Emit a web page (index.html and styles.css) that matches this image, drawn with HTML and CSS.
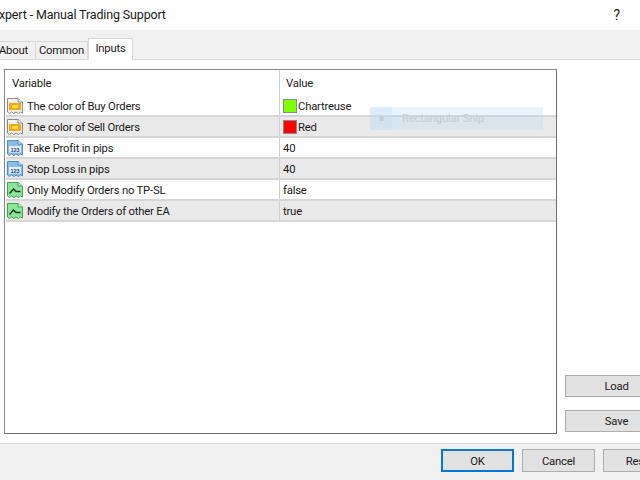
FILE: index.html
```html
<!DOCTYPE html>
<html lang="en">
<head>
<meta charset="utf-8">
<title>Expert - Manual Trading Support</title>
<link rel="stylesheet" href="styles.css">
</head>
<body>
<svg class="defs" width="0" height="0" aria-hidden="true">
  <symbol id="ic-color" viewBox="0 0 18 18">
    <path d="M1.500 1.500H12L16.500 5V16L14.500 15L12.500 16.500L10 15L8 16.500L5.500 15L3.500 16.500L1.500 15Z" fill="#f4f2ee" stroke="#8a8a86"/>
    <path d="M12 1.500V5H16.500" fill="#fff" stroke="#8a8a86"/>
    <rect x="3" y="6" width="12" height="7" fill="#f7a51e"/>
    <rect x="6" y="8" width="6" height="3" fill="#ffe23c"/>
  </symbol>
  <symbol id="ic-num" viewBox="0 0 18 18">
    <path d="M1.500 1.500H12L16.500 5V16L14.500 15L12.500 16.500L10 15L8 16.500L5.500 15L3.500 16.500L1.500 15Z" fill="#8dbce8" stroke="#4d8fc9"/>
    <path d="M12 1.500V5H16.500" fill="#d7e9f8" stroke="#4d8fc9"/>
    <rect x="3" y="7" width="12" height="6.500" fill="#e4f0fa"/>
    <text x="9" y="12.600" class="ic-num-text">123</text>
  </symbol>
  <symbol id="ic-bool" viewBox="0 0 18 18">
    <path d="M1.500 1.500H12L16.500 5V16L14.500 15L12.500 16.500L10 15L8 16.500L5.500 15L3.500 16.500L1.500 15Z" fill="#8fe39b" stroke="#39a94c"/>
    <path d="M12 1.500V5H16.500" fill="#d5f5da" stroke="#39a94c"/>
    <path d="M3.500 12.500L7.500 8L10 10.500H14.500" fill="none" stroke="#0f3f18" stroke-width="1.500"/>
  </symbol>
</svg>

<header class="title-bar">
  <span class="title">Expert - Manual Trading Support</span>
  <span class="help">?</span>
</header>

<nav class="tab-strip">
  <span class="tab tab-about">About</span>
  <span class="tab tab-common">Common</span>
  <span class="tab tab-active">Inputs</span>
</nav>

<main class="content">
  <section class="list">
    <div class="row head">
      <div class="cell var"><span class="head-label">Variable</span></div>
      <div class="cell val"><span class="head-label">Value</span></div>
    </div>
    <div class="row">
      <div class="cell var"><svg class="icon"><use href="#ic-color"/></svg><span>The color of Buy Orders</span></div>
      <div class="cell val"><i class="swatch swatch-green"></i><span>Chartreuse</span></div>
    </div>
    <div class="row alt">
      <div class="cell var"><svg class="icon"><use href="#ic-color"/></svg><span>The color of Sell Orders</span></div>
      <div class="cell val"><i class="swatch swatch-red"></i><span>Red</span></div>
    </div>
    <div class="row">
      <div class="cell var"><svg class="icon"><use href="#ic-num"/></svg><span>Take Profit in pips</span></div>
      <div class="cell val"><span>40</span></div>
    </div>
    <div class="row alt">
      <div class="cell var"><svg class="icon"><use href="#ic-num"/></svg><span>Stop Loss in pips</span></div>
      <div class="cell val"><span>40</span></div>
    </div>
    <div class="row">
      <div class="cell var"><svg class="icon"><use href="#ic-bool"/></svg><span>Only Modify Orders no TP-SL</span></div>
      <div class="cell val"><span>false</span></div>
    </div>
    <div class="row alt">
      <div class="cell var"><svg class="icon"><use href="#ic-bool"/></svg><span>Modify the Orders of other EA</span></div>
      <div class="cell val"><span>true</span></div>
    </div>
  </section>
  <aside class="side">
    <button class="btn side-btn">Load</button>
    <button class="btn side-btn">Save</button>
  </aside>
</main>

<footer class="footer">
  <button class="btn foot-btn default">OK</button>
  <button class="btn foot-btn">Cancel</button>
  <button class="btn foot-btn">Reset</button>
</footer>

<div class="snip"><i class="snip-icon"><b></b></i><span>Rectangular Snip</span></div>
</body>
</html>
```

FILE: styles.css
```css
* { box-sizing: border-box; }
html, body { margin: 0; padding: 0; }
body {
  position: relative;
  width: 640px;
  height: 480px;
  overflow: hidden;
  display: flex;
  flex-direction: column;
  background: #fff;
  color: #1a1a1a;
  font: 11.300px/16px Roboto, "Liberation Sans", sans-serif;
  letter-spacing: -0.2px;
}
.defs { position: absolute; }
.ic-num-text { font: 700 5.500px "Liberation Sans", sans-serif; fill: #1d4f80; text-anchor: middle; letter-spacing: 0; }

.title-bar {
  height: 30px;
  flex: none;
  display: flex;
  align-items: center;
  justify-content: space-between;
  padding: 0 20px 0 0;
  overflow: hidden;
}
.title { font-size: 12.500px; margin-left: -8px; white-space: nowrap; letter-spacing: -0.15px; }
.help { font-size: 14px; }

.tab-strip {
  height: 30px;
  flex: none;
  display: flex;
  align-items: flex-end;
  background: #f0f0f0;
  border-bottom: 1px solid #d9d9d9;
}
.tab {
  height: 19px;
  line-height: 17px;
  text-align: center;
  border: 1px solid #d9d9d9;
  border-bottom: 0;
  border-left: 0;
  margin-bottom: -1px;
}
.tab-about { width: 36px; text-indent: -8px; }
.tab-common { width: 52px; }
.tab-active {
  width: 45px;
  height: 22px;
  line-height: 20px;
  background: #fff;
  border-left: 1px solid #d9d9d9;
  border-bottom: 1px solid #fff;
}

.content {
  flex: 1;
  display: flex;
  align-items: flex-end;
  padding: 9px 0 9px 4px;
  gap: 8px;
  min-height: 0;
}
.list {
  width: 553px;
  height: 100%;
  border: 1px solid #828790;
  border-right-color: #6d6d6d;
  border-bottom-color: #6d6d6d;
  padding: 0 0 0 1px;
}
.row {
  display: flex;
  height: 21px;
  border-bottom: 2px solid #d6d6d6;
}
.row.head { height: 26px; border-bottom: 0; }
.row.alt { background: #e9e9e9; }
.cell { display: flex; align-items: center; white-space: nowrap; padding-top: 1px; }
.row:not(.head) .cell > span { padding-top: 2px; }
.var { width: 274px; border-right: 1px solid #cfcfcf; }
.val { flex: 1; padding-left: 3px; }
.head-label { padding-left: 6px; }
.val .head-label { padding-left: 3px; }
.icon { width: 18px; height: 18px; margin-right: 3px; flex: none; }
.swatch {
  display: block;
  width: 14px;
  height: 14px;
  margin-right: 1px;
  border: 1px solid #8a8a8a;
  flex: none;
}
.swatch-green { background: #7fff00; }
.swatch-red { background: #ff0000; }

.side {
  flex: 1;
  display: flex;
  flex-direction: column;
  gap: 13px;
  padding-bottom: 2px;
  min-width: 0;
}
.btn {
  font: inherit;
  color: inherit;
  letter-spacing: inherit;
  background: #e1e1e1;
  border: 1px solid #adadad;
  padding: 2px 0 0;
  margin: 0;
}
.side-btn { width: 103px; height: 22px; flex: none; }

.footer {
  height: 37px;
  flex: none;
  display: flex;
  gap: 8px;
  padding: 5px 0 0 441px;
  background: #f0f0f0;
  border-top: 1px solid #dfdfdf;
}
.foot-btn { width: 73px; height: 23px; flex: none; }
.foot-btn.default { border: 2px solid #0078d7; }

.snip {
  position: absolute;
  left: 370px;
  top: 107px;
  width: 173px;
  height: 23px;
  display: flex;
  align-items: center;
  background: rgba(190, 220, 245, 0.32);
  color: #c4cdd6;
}
.snip-icon {
  width: 22px;
  height: 23px;
  display: flex;
  align-items: center;
  justify-content: center;
  background: rgba(190, 220, 245, 0.3);
  margin-right: 10px;
}
.snip-icon b { width: 5px; height: 5px; border-radius: 50%; background: #c4ccd4; }
```
